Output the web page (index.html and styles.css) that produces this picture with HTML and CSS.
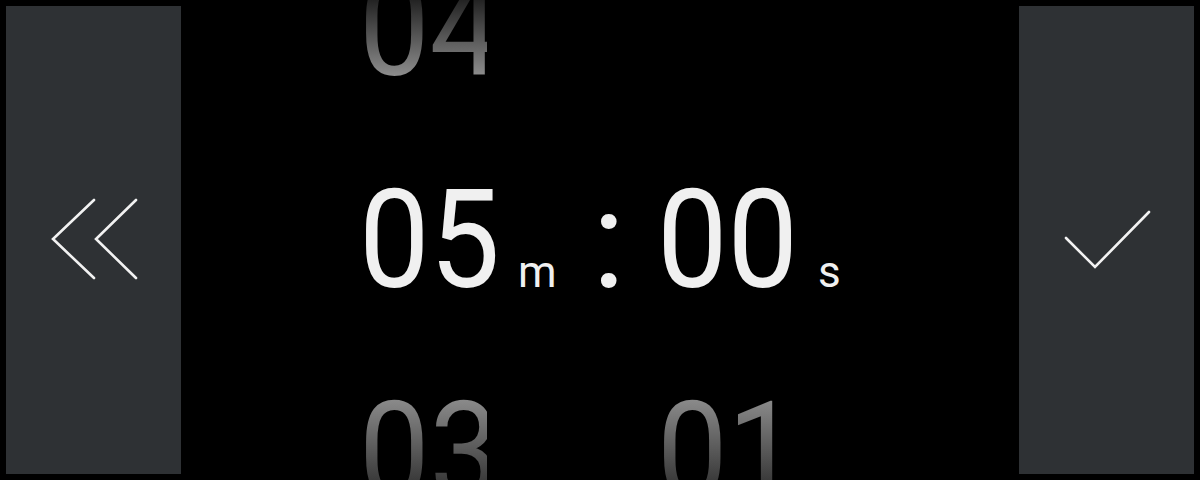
FILE: index.html
```html
<!DOCTYPE html>
<html>
<head>
<meta charset="utf-8">
<link rel="stylesheet" href="styles.css">
</head>
<body>
<div class="screen">
  <div class="panel">
    <svg class="icon" width="175" height="100" viewBox="0 0 175 100">
      <polyline points="88,10 47,49 88,88" />
      <polyline points="130,10 90,49 130,88" />
    </svg>
  </div>
  <div class="picker">
    <div class="row fade-top">
      <span class="num">04</span><span class="unit m hide">m</span><span class="colon hide">:</span><span class="num sec hide">00</span><span class="unit s hide">s</span>
    </div>
    <div class="row current">
      <span class="num">05</span><span class="unit m">m</span><span class="colon">:</span><span class="num sec">00</span><span class="unit s">s</span>
    </div>
    <div class="row fade-bottom">
      <span class="num">03</span><span class="unit m hide">m</span><span class="colon hide">:</span><span class="num sec">01</span><span class="unit s hide">s</span>
    </div>
  </div>
  <div class="panel">
    <svg class="icon" width="175" height="100" viewBox="0 0 175 100">
      <polyline points="47,48 76,77 130,22" />
    </svg>
  </div>
</div>
</body>
</html>
```

FILE: styles.css
```css
html, body {
  margin: 0;
  padding: 0;
  background: #000;
}
.screen {
  width: 1200px;
  height: 480px;
  display: flex;
  background: #000;
  overflow: hidden;
  font-family: Roboto, "Liberation Sans", sans-serif;
}
.panel {
  width: 175px;
  margin: 6px;
  background: #2e3134;
  display: flex;
  align-items: center;
  justify-content: center;
  flex-shrink: 0;
}
.icon polyline {
  fill: none;
  stroke: #f2f2f2;
  stroke-width: 2.6;
  stroke-linecap: round;
  stroke-linejoin: miter;
}
.picker {
  flex: 1;
  height: 480px;
  display: flex;
  flex-direction: column;
  justify-content: center;
  overflow: hidden;
}
.row {
  flex-shrink: 0;
  height: 212px;
  line-height: 212px;
  display: flex;
  align-items: baseline;
  justify-content: center;
  color: #f0f0f0;
}
.num {
  font-size: 138px;
  width: 141px;
  white-space: nowrap;
  transform: scaleX(0.91);
  transform-origin: left center;
}
.unit {
  font-size: 44px;
  line-height: 212px;
}
.unit.m {
  margin-left: 18px;
  width: 39px;
}
.unit.s {
  margin-left: 20px;
  width: 23px;
}
.colon {
  font-size: 138px;
  margin-left: 35px;
  width: 33px;
}
.num.sec {
  margin-left: 32px;
}
.hide {
  visibility: hidden;
}
.fade-top .num,
.fade-bottom .num {
  color: transparent;
  -webkit-background-clip: text;
  background-clip: text;
  height: 212px;
}
.fade-top .num {
  background-image: linear-gradient(to bottom, #000 53px, #8c8c8c 153px);
}
.fade-bottom .num {
  background-image: linear-gradient(to bottom, #8a8a8a 54px, #000 194px);
}
```
